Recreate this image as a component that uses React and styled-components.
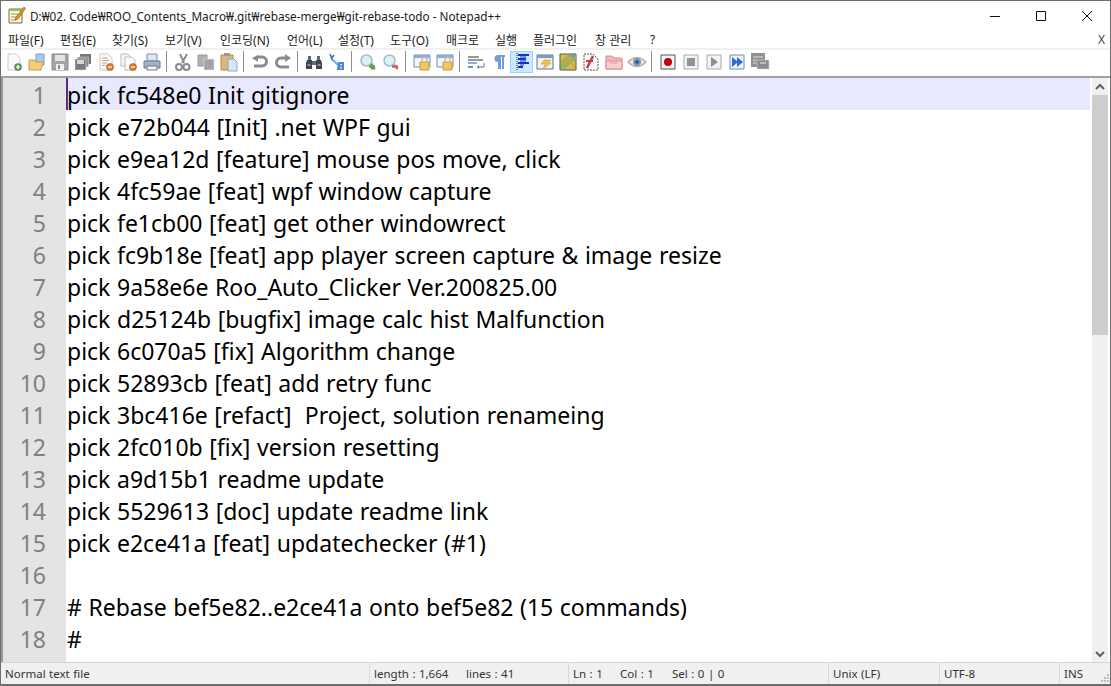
import React from 'react';
import styled, { createGlobalStyle } from 'styled-components';

const UI_FONT = '"Noto Sans", "Noto Sans CJK KR", sans-serif';

const GlobalStyle = createGlobalStyle`
  html, body {
    margin: 0;
    padding: 0;
    background: #ffffff;
  }
  * {
    box-sizing: border-box;
  }
`;

const LINES = [
  'pick fc548e0 Init gitignore',
  'pick e72b044 [Init] .net WPF gui',
  'pick e9ea12d [feature] mouse pos move, click',
  'pick 4fc59ae [feat] wpf window capture',
  'pick fe1cb00 [feat] get other windowrect',
  'pick fc9b18e [feat] app player screen capture & image resize',
  'pick 9a58e6e Roo_Auto_Clicker Ver.200825.00',
  'pick d25124b [bugfix] image calc hist Malfunction',
  'pick 6c070a5 [fix] Algorithm change',
  'pick 52893cb [feat] add retry func',
  'pick 3bc416e [refact]  Project, solution renameing',
  'pick 2fc010b [fix] version resetting',
  'pick a9d15b1 readme update',
  'pick 5529613 [doc] update readme link',
  'pick e2ce41a [feat] updatechecker (#1)',
  '',
  '# Rebase bef5e82..e2ce41a onto bef5e82 (15 commands)',
  '#',
];

const MENUS = [
  ['파일(F)', 52], ['편집(E)', 52], ['찾기(S)', 53], ['보기(V)', 55], ['인코딩(N)', 67], ['언어(L)', 51],
  ['설정(T)', 52], ['도구(O)', 56], ['매크로', 49], ['실행', 38], ['플러그인', 62], ['창 관리', 55], ['?', 20],
];

const Svg = ({ children }) => (
  <svg width="20" height="20" viewBox="0 0 20 20">{children}</svg>
);

const Page = ({ fold = '#c9c9c9' }) => (
  <path d="M4 2h8l4 4v12H4z" fill="#fafafa" stroke={fold} />
);

const Badge = ({ fill, mark }) => (
  <>
    <circle cx="14" cy="15" r="3.6" fill={fill} stroke="#00000040" />
    <path d={mark} stroke="#fff" strokeWidth="1.2" />
  </>
);

const NewIcon = () => <Svg><Page /><Badge fill="#5aa04a" mark="M12 15h4M14 13v4" /></Svg>;
const OpenIcon = () => (
  <Svg>
    <path d="M9 2h8v11H9z" fill="#a9c8ec" stroke="#7f9fc6" />
    <path d="M2 8h6l1 2h7l-2 8H2z" fill="#f3cd7a" stroke="#c99a3e" />
  </Svg>
);
const SaveIcon = () => (
  <Svg>
    <path d="M2 2h16v16H2z" fill="#a5a5a5" stroke="#8a8a8a" />
    <path d="M5 3h10v6H5z" fill="#e4e4e4" />
    <path d="M6 12h8v6H6z" fill="#efefef" />
    <path d="M8 13h2v4H8z" fill="#8c8c8c" />
  </Svg>
);
const SaveAllIcon = () => (
  <Svg>
    <path d="M7 2h11v10H7z" fill="#777" />
    <path d="M4.500 5h11v10h-11z" fill="#8a8a8a" stroke="#ddd" strokeWidth=".5" />
    <path d="M2 7h11v11H2z" fill="#7b7b7b" stroke="#e5e5e5" strokeWidth=".5" />
    <path d="M4 8h7v4H4z" fill="#d6d6d6" />
  </Svg>
);
const Lines = () => <path d="M6 6h6M6 8.500h7M6 11h5M6 13.500h3" stroke="#c7a583" />;
const CloseIcon = () => (
  <Svg><Page /><Lines /><Badge fill="#e47b28" mark="M12 15h4" /></Svg>
);
const CloseAllIcon = () => (
  <Svg>
    <path d="M2 2h7l3 3v9H2z" fill="#f5f5f5" stroke="#bdbdbd" />
    <path d="M6 5h7l3 3v10H6z" fill="#fafafa" stroke="#bdbdbd" />
    <Badge fill="#e47b28" mark="M12 15h4" />
  </Svg>
);
const PrintIcon = () => (
  <Svg>
    <path d="M5 2h10v7H5z" fill="#dce6f2" stroke="#7d8ea3" />
    <path d="M2 9h16v7H2z" fill="#9fb2c9" stroke="#66788e" />
    <path d="M5 14h10v4H5z" fill="#f4f4f4" stroke="#66788e" />
  </Svg>
);
const CutIcon = () => (
  <Svg>
    <path d="M7 2l4 9M14 2l-5 9" stroke="#8c8c8c" strokeWidth="2" />
    <circle cx="6" cy="15" r="3" fill="none" stroke="#8a8a8a" strokeWidth="2" />
    <circle cx="13.500" cy="15" r="3" fill="none" stroke="#8a8a8a" strokeWidth="2" />
  </Svg>
);
const CopyIcon = () => (
  <Svg>
    <path d="M2 3h9v11H2z" fill="#b0b0b0" stroke="#999" />
    <path d="M8 7h10v11H8z" fill="#a3a3a3" stroke="#e8e8e8" strokeWidth=".6" />
  </Svg>
);
const PasteIcon = () => (
  <Svg>
    <path d="M2 3h12v15H2z" fill="#dcb67c" stroke="#b5894a" />
    <path d="M5 1h6v3H5z" fill="#9a9a9a" />
    <path d="M9 7h6l3 3v9H9z" fill="#d9e6f5" stroke="#86a6cc" />
  </Svg>
);
const UndoIcon = () => (
  <Svg>
    <path d="M7 5h5a4.500 4.500 0 0 1 0 9H4" fill="none" stroke="#8b8b8b" strokeWidth="3" />
    <path d="M2 5l6-3v7z" fill="#8b8b8b" transform="translate(0 1)" />
  </Svg>
);
const RedoIcon = () => (
  <Svg>
    <path d="M13 6H8a4.500 4.500 0 0 0 0 9h8" fill="none" stroke="#8b8b8b" strokeWidth="3" />
    <path d="M18 6l-6-4v8z" fill="#8b8b8b" />
  </Svg>
);
const FindIcon = () => (
  <Svg>
    <path d="M3 8h5v9H2v-6zM12 8h5l1 3v6h-6z" fill="#3f4650" />
    <path d="M4 4h3v4H4zM13 4h3v4h-3zM8 9h4v4H8z" fill="#5f6872" />
    <path d="M3.500 13h3M13.500 13h3" stroke="#d8d8d8" />
  </Svg>
);
const ReplaceIcon = () => (
  <Svg>
    <path d="M3 2l3 7M4 7l3-4" stroke="#2d6fbd" strokeWidth="1.500" fill="none" />
    <path d="M6 8l5 5" stroke="#76a7de" strokeWidth="2" />
    <path d="M11 10h6v8h-7z" fill="#4b87d2" />
    <path d="M13 12h2v1.500h-2zM13 15h2v1.500h-2z" fill="#c8defa" />
  </Svg>
);
const ZoomIcon = ({ color, mark }) => (
  <Svg>
    <circle cx="8.500" cy="8.500" r="5.500" fill="#dff0f5" stroke="#9dbccb" strokeWidth="1.500" />
    <path d="M13 13l4 4" stroke="#b08f62" strokeWidth="2.500" />
    <path d={mark} stroke={color} strokeWidth="2.500" />
  </Svg>
);
const SyncIcon = () => (
  <Svg>
    <path d="M2 3h16v12H2z" fill="#f0f4f9" stroke="#6f8fb4" />
    <path d="M2 3h16v3H2z" fill="#8eadd0" />
    <path d="M8 10h9v8H8z" fill="#eec764" stroke="#c99d37" />
    <path d="M10 10V8a2.500 2.500 0 0 1 5 0v2" fill="none" stroke="#c9c0a8" strokeWidth="1.500" />
  </Svg>
);
const WrapIcon = () => (
  <Svg>
    <path d="M2 5h11M2 8h15" stroke="#333" />
    <path d="M2 11h9" stroke="#6a94c8" strokeWidth="1.500" />
    <path d="M2 15h5" stroke="#6a94c8" strokeWidth="2" />
    <path d="M18 11v4h-6" fill="none" stroke="#4a78b0" />
    <path d="M13 13l-2 2 2 2z" fill="#4a78b0" />
  </Svg>
);
const PilcrowIcon = () => (
  <Svg>
    <path d="M9 3h7v2h-1v12h-2V5h-1v12H9v-7a3.500 3.500 0 0 1 0-7z" fill="#6f9fd6" />
  </Svg>
);
const GuideIcon = () => (
  <Svg>
    <path d="M5 1v18" stroke="#222" strokeDasharray="1 1" />
    <path d="M6 3h11M6 7h8M6 11h11M6 15h5" stroke="#1832c4" strokeWidth="2" />
    <path d="M8 5h6M8 9h6M8 13h4" stroke="#1832c4" />
  </Svg>
);
const LangIcon = () => (
  <Svg>
    <path d="M2 3h16v14H2z" fill="#eef3f8" stroke="#56718f" />
    <path d="M2 3h16v3H2z" fill="#7f9cbc" />
    <path d="M9 8h7l-3 3h3l-8 6 2-5H6z" fill="#eec04e" stroke="#c7982e" strokeWidth=".5" />
  </Svg>
);
const MapIcon = () => (
  <Svg>
    <path d="M2 2h16v16H2z" fill="#d6bd5c" stroke="#4d5a42" />
    <path d="M3 9l7-6h8v4L7 17H3z" fill="#96b45c" />
    <path d="M3 12L17 4M8 4l9 12" stroke="#d8a23c" strokeWidth="1.500" />
    <path d="M12 3h5v4z" fill="#5f9fd8" />
  </Svg>
);
const FunctionIcon = () => (
  <Svg>
    <path d="M3 2h9l5 5v11H3z" fill="#fafafa" stroke="#555" strokeDasharray="2 1" />
    <path d="M6 16l6-12" stroke="#c33c4a" strokeWidth="2.500" />
    <path d="M5 9h7" stroke="#c33c4a" strokeWidth="2" />
  </Svg>
);
const FolderIcon = () => (
  <Svg>
    <path d="M2 4h6l2 2h8v11H2z" fill="#f2b9bc" stroke="#d88c90" />
    <path d="M2 9h16v8H2z" fill="#f6cfd0" stroke="#d88c90" />
    <path d="M6 11h8" stroke="#e39a9e" />
  </Svg>
);
const EyeIcon = () => (
  <Svg>
    <path d="M1 10q9-9 18 0q-9 9-18 0z" fill="#eee8df" stroke="#bfae9a" strokeWidth="1.500" />
    <circle cx="10" cy="10" r="4" fill="#6f9cc8" />
    <circle cx="10" cy="10" r="1.800" fill="#2e4f78" />
  </Svg>
);
const MacroFrame = ({ stroke = '#9a9a9a', children }) => (
  <Svg>
    <path d="M3 3h14v14H3z" fill="#f4f4f4" stroke={stroke} />
    {children}
  </Svg>
);
const RecordIcon = () => <MacroFrame stroke="#555"><circle cx="10" cy="10" r="4" fill="#c4000c" /></MacroFrame>;
const StopIcon = () => <MacroFrame stroke="#aaa"><path d="M6 6h8v8H6z" fill="#929292" /></MacroFrame>;
const PlayIcon = () => <MacroFrame stroke="#aaa"><path d="M7 5l7 5-7 5z" fill="#8e8e8e" /></MacroFrame>;
const PlayManyIcon = () => (
  <MacroFrame stroke="#6f8fb4"><path d="M5 5l6 5-6 5zM10 5l6 5-6 5z" fill="#2f6bd6" /></MacroFrame>
);
const SaveMacroIcon = () => (
  <Svg>
    <path d="M1 1h14v14H1z" fill="#909090" />
    <path d="M3 5h10M3 8h3M3 11h3" stroke="#e2e2e2" />
    <path d="M7 8h12v9H7z" fill="#8b8b8b" stroke="#d8d8d8" strokeWidth=".6" />
    <path d="M10 11h6" stroke="#eee" />
  </Svg>
);

const ZoomInIcon = () => <ZoomIcon color="#58a54a" mark="M11 14.500h6M14 11.500v6" />;
const ZoomOutIcon = () => <ZoomIcon color="#d9576a" mark="M11 14.500h6" />;

const TOOLBAR = [
  NewIcon, OpenIcon, SaveIcon, SaveAllIcon, CloseIcon, CloseAllIcon, PrintIcon, null,
  CutIcon, CopyIcon, PasteIcon, null,
  UndoIcon, RedoIcon, null,
  FindIcon, ReplaceIcon, null,
  ZoomInIcon, ZoomOutIcon, null,
  SyncIcon, SyncIcon, null,
  WrapIcon, PilcrowIcon, GuideIcon, LangIcon, MapIcon, FunctionIcon, FolderIcon, EyeIcon, null,
  RecordIcon, StopIcon, PlayIcon, PlayManyIcon, SaveMacroIcon,
];

export default function App() {
  return (
    <Window>
      <GlobalStyle />
      <TitleBar>
        <AppIcon width="18" height="18" viewBox="0 0 18 18">
          <path d="M1 3h13v14H1z" fill="#fdf6c8" stroke="#6d6d4a" />
          <path d="M1 3h13v2H1z" fill="#8fbf6a" />
          <path d="M3 8h7M3 11h7M3 14h5" stroke="#9a9a70" />
          <path d="M8 11l8-10 1.500 1.500L10 13l-3 1z" fill="#d99a2b" stroke="#7a4c12" strokeWidth=".6" />
        </AppIcon>
        <TitleText>D:₩02. Code₩ROO_Contents_Macro₩.git₩rebase-merge₩git-rebase-todo - Notepad++</TitleText>
        <WindowButtons>
          <WindowButton width="46" height="20" viewBox="0 0 46 20">
            <path d="M18 10.500h10" stroke="#111" />
          </WindowButton>
          <WindowButton width="46" height="20" viewBox="0 0 46 20">
            <path d="M18.500 5.500h9v9h-9z" fill="none" stroke="#111" />
          </WindowButton>
          <WindowButton width="46" height="20" viewBox="0 0 46 20">
            <path d="M18 5l10 10M28 5L18 15" stroke="#111" />
          </WindowButton>
        </WindowButtons>
      </TitleBar>
      <MenuBar>
        {MENUS.map(([label, width]) => (
          <MenuItem key={label} $width={width}>{label}</MenuItem>
        ))}
        <MenuClose>X</MenuClose>
      </MenuBar>
      <Toolbar>
        {TOOLBAR.map((Icon, index) => (
          Icon ? (
            <ToolButton key={index} $active={Icon === GuideIcon}>
              <Icon />
            </ToolButton>
          ) : <ToolSeparator key={index} />
        ))}
      </Toolbar>
      <EditorArea>
        <Gutter>
          {LINES.map((line, index) => (
            <LineNumber key={index}>{index + 1}</LineNumber>
          ))}
        </Gutter>
        <Code>
          {LINES.map((line, index) => (
            <CodeLine key={index} $current={index === 0}>
              {index === 0 && <Caret />}
              {line}
            </CodeLine>
          ))}
        </Code>
        <ScrollBar>
          <ScrollArrow>
            <svg width="10" height="8" viewBox="0 0 10 8"><path d="M1 6l4-4 4 4" fill="none" stroke="#606060" strokeWidth="2" /></svg>
          </ScrollArrow>
          <ScrollTrack>
            <ScrollThumb />
          </ScrollTrack>
          <ScrollArrow>
            <svg width="10" height="8" viewBox="0 0 10 8"><path d="M1 2l4 4 4-4" fill="none" stroke="#606060" strokeWidth="2" /></svg>
          </ScrollArrow>
        </ScrollBar>
      </EditorArea>
      <StatusBar>
        <StatusCell $width={369}>Normal text file</StatusCell>
        <StatusCell $width={199}>
          <StatusPart $width={92}>length : 1,664</StatusPart>
          <StatusPart>lines : 41</StatusPart>
        </StatusCell>
        <StatusCell $width={260}>
          <StatusPart $width={47}>Ln : 1</StatusPart>
          <StatusPart $width={52}>Col : 1</StatusPart>
          <StatusPart>Sel : 0 | 0</StatusPart>
        </StatusCell>
        <StatusCell $width={111}>Unix (LF)</StatusCell>
        <StatusCell $width={120}>UTF-8</StatusCell>
        <StatusCell $width={35}>INS</StatusCell>
        <Grip width="12" height="12" viewBox="0 0 12 12">
          <path d="M9 2h2v2H9zM6 5h2v2H6zM9 5h2v2H9zM3 8h2v2H3zM6 8h2v2H6zM9 8h2v2H9z" fill="#bdbdbd" />
        </Grip>
      </StatusBar>
    </Window>
  );
}

const Window = styled('div')`
  width: 1111px;
  height: 686px;
  display: flex;
  flex-direction: column;
  overflow: hidden;
  background: #ffffff;
  border: 1px solid #6e6e6e;
  border-bottom-width: 2px;
  font-family: ${UI_FONT};
  color: #1a1a1a;
`;

const TitleBar = styled('div')`
  height: 29px;
  flex: none;
  display: flex;
  align-items: center;
  padding-left: 7px;
`;

const AppIcon = styled('svg')`
  flex: none;
  margin-top: -1px;
`;

const TitleText = styled('div')`
  margin-left: 4px;
  font-size: 11.75px;
  white-space: nowrap;
`;

const WindowButtons = styled('div')`
  margin-left: auto;
  display: flex;
`;

const WindowButton = styled('svg')`
  display: block;
`;

const MenuBar = styled('div')`
  height: 20px;
  flex: none;
  display: flex;
  align-items: center;
  padding: 1px 0 0 7px;
  font-size: 12px;
  border-bottom: 2px solid #f0f0f0;
`;

const MenuItem = styled('div')`
  width: ${({ $width }) => $width}px;
  flex: none;
  white-space: nowrap;
`;

const MenuClose = styled('div')`
  margin-left: auto;
  margin-right: 5px;
  color: #444;
`;

const Toolbar = styled('div')`
  height: 26px;
  flex: none;
  display: flex;
  align-items: flex-start;
  padding: 1px 0 0 1px;
`;

const ToolButton = styled('div')`
  width: 23px;
  height: 22px;
  flex: none;
  display: flex;
  align-items: center;
  justify-content: center;
  background: ${({ $active }) => ($active ? '#cce8ff' : 'transparent')};
  border: 1px solid ${({ $active }) => ($active ? '#99d1ff' : 'transparent')};
`;

const ToolSeparator = styled('div')`
  width: 8px;
  height: 21px;
  flex: none;
  position: relative;
  &::after {
    content: '';
    position: absolute;
    left: 3px;
    top: 0;
    bottom: 0;
    width: 1px;
    background: #8f8f8f;
  }
`;

const EditorArea = styled('div')`
  flex: 1;
  min-height: 0;
  display: flex;
  overflow: hidden;
  border-top: 2px solid #a0a0a0;
  border-left: 2px solid #9a9a9a;
`;

const Gutter = styled('div')`
  width: 63px;
  flex: none;
  background: #e4e4e4;
`;

const LineNumber = styled('div')`
  height: 32px;
  padding-right: 20px;
  text-align: right;
  font-size: 23px;
  line-height: 34px;
  color: #808080;
`;

const Code = styled('div')`
  flex: 1;
  min-width: 0;
`;

const CodeLine = styled('div')`
  position: relative;
  height: 32px;
  padding-left: 1px;
  font-size: 23px;
  line-height: 34px;
  word-spacing: 0.6px;
  white-space: pre;
  color: #000000;
  background: ${({ $current }) => ($current ? '#e8e8ff' : 'transparent')};
`;

const Caret = styled('span')`
  position: absolute;
  left: 0;
  top: 0;
  bottom: 0;
  width: 2px;
  background: #5b2a86;
`;

const ScrollBar = styled('div')`
  width: 16px;
  flex: none;
  margin-left: 2px;
  margin-right: 2px;
  display: flex;
  flex-direction: column;
  background: #f0f0f0;
`;

const ScrollArrow = styled('div')`
  height: 17px;
  flex: none;
  display: flex;
  align-items: center;
  justify-content: center;
`;

const ScrollTrack = styled('div')`
  flex: 1;
  min-height: 0;
`;

const ScrollThumb = styled('div')`
  height: 240px;
  background: #cdcdcd;
`;

const StatusBar = styled('div')`
  height: 22px;
  flex: none;
  display: flex;
  align-items: center;
  background: #f0f0f0;
  border-top: 1px solid #d4d4d4;
  font-size: 11.5px;
  word-spacing: 0.5px;
  color: #333;
`;

const StatusCell = styled('div')`
  width: ${({ $width }) => $width}px;
  height: 100%;
  flex: none;
  display: flex;
  align-items: center;
  padding-left: 4px;
  white-space: nowrap;
  border-right: 1px solid #d9d9d9;
  &:last-of-type {
    border-right: 0;
  }
`;

const StatusPart = styled('span')`
  width: ${({ $width }) => ($width ? `${$width}px` : 'auto')};
  flex: none;
`;

const Grip = styled('svg')`
  margin-left: auto;
  align-self: flex-end;
`;
